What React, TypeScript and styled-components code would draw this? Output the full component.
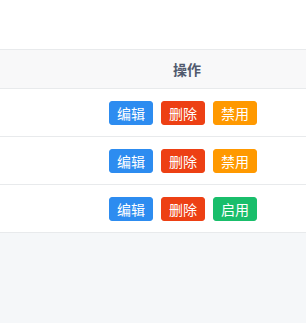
import React from "react";
import styled, { createGlobalStyle } from "styled-components";

const GlobalStyle = createGlobalStyle`
  html, body {
    margin: 0;
    padding: 0;
    background: #f5f7f9;
    font-family: "Noto Sans CJK SC", "Noto Sans", sans-serif;
  }
`;

const Page = styled.div`
  width: 306px;
  overflow: hidden;
`;

const Top = styled.div`
  height: 49px;
  background: #fff;
`;

const Table = styled.table`
  width: 306px;
  border-collapse: collapse;
  table-layout: fixed;
  background: #fff;
  border-top: 1px solid #e8eaec;
`;

const Th = styled.th<{ $w?: number }>`
  width: ${({ $w }) => ($w ? `${$w}px` : "auto")};
  height: 38px;
  padding: 0;
  background: #f8f8f9;
  color: #515a6e;
  font-size: 14px;
  font-weight: 700;
  text-align: center;
  border-bottom: 1px solid #e8eaec;
`;

const ThLabel = styled.span`
  padding-left: 8px;
`;

const Td = styled.td`
  height: 47px;
  padding: 0;
  text-align: center;
  border-bottom: 1px solid #e8eaec;
`;

const Actions = styled.div`
  display: flex;
  justify-content: center;
  gap: 8px;
`;

const colors = {
  primary: "#2d8cf0",
  error: "#ed4014",
  warning: "#ff9900",
  success: "#19be6b",
};

const Btn = styled.button<{ $kind: keyof typeof colors }>`
  height: 24px;
  width: 44px;
  padding: 0;
  border: 1px solid ${({ $kind }) => colors[$kind]};
  background: ${({ $kind }) => colors[$kind]};
  color: #fff;
  font-family: inherit;
  font-size: 14px;
  line-height: 22px;
  border-radius: 3px;
  cursor: pointer;
`;

const rows = [
  { id: 1, enabled: true },
  { id: 2, enabled: true },
  { id: 3, enabled: false },
];

export default function App() {
  return (
    <Page>
      <GlobalStyle />
      <Top />
      <Table>
        <thead>
          <tr>
            <Th $w={60} />
            <Th>
              <ThLabel>操作</ThLabel>
            </Th>
          </tr>
        </thead>
        <tbody>
          {rows.map((r) => (
            <tr key={r.id}>
              <Td />
              <Td>
                <Actions>
                  <Btn $kind="primary">编辑</Btn>
                  <Btn $kind="error">删除</Btn>
                  {r.enabled ? (
                    <Btn $kind="warning">禁用</Btn>
                  ) : (
                    <Btn $kind="success">启用</Btn>
                  )}
                </Actions>
              </Td>
            </tr>
          ))}
        </tbody>
      </Table>
    </Page>
  );
}
